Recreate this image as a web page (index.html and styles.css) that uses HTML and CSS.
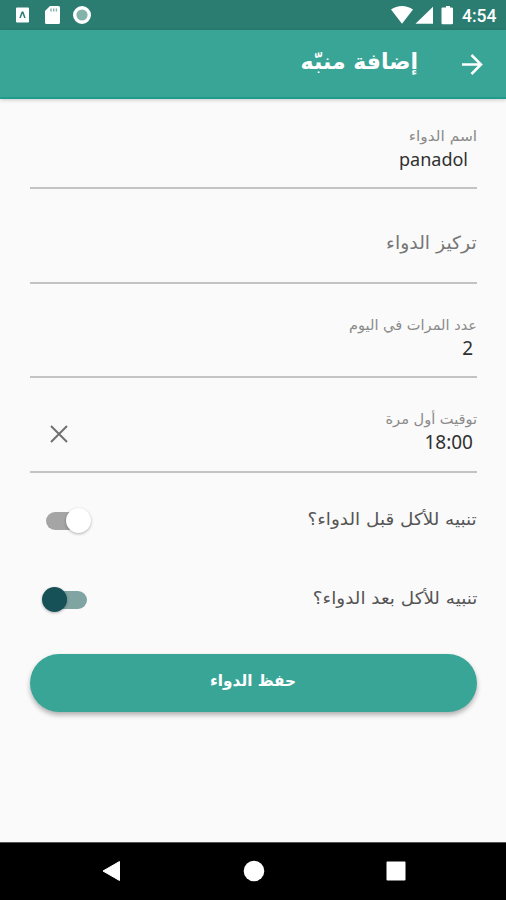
FILE: index.html
```html
<!DOCTYPE html>
<html lang="ar" dir="rtl">
<head>
<meta charset="utf-8">
<title>إضافة منبّه</title>
<link rel="stylesheet" href="styles.css">
</head>
<body>
<div class="status" dir="ltr">
  <svg class="status-left" width="80" height="20" viewBox="0 0 80 20">
    <path fill="#fff" fill-rule="evenodd" d="M2 2.500h11a1 1 0 0 1 1 1v13a1 1 0 0 1-1 1H2a1 1 0 0 1-1-1v-13a1 1 0 0 1 1-1zM4.300 13h1.500l1.700-4.500L9.200 13h1.500L8.400 6.500H6.600z"/>
    <path fill="#fff" d="M35 1h8.500a1.500 1.500 0 0 1 1.500 1.500v15a1.500 1.500 0 0 1-1.500 1.500h-12a1.500 1.500 0 0 1-1.500-1.500V6z"/>
    <path stroke="#84b3ab" stroke-width="1.400" d="M36 3.500v3M38.700 3.500v3M41.400 3.500v3"/>
    <circle cx="67" cy="10" r="7.300" fill="#84b3ab" stroke="#fff" stroke-width="3.400"/>
  </svg>
  <div class="status-right">
    <svg width="66" height="20" viewBox="0 0 66 20" fill="#fff">
      <path d="M1 4.500C7.500-.3 16.500-.3 23 4.500L12 18.700z"/>
      <path d="M43 1.700v17H25.500z"/>
      <path d="M56 1h4v1.500h1.800a1.200 1.200 0 0 1 1.200 1.200v14.300a1.200 1.200 0 0 1-1.200 1.200h-9.100a1.200 1.200 0 0 1-1.200-1.200V3.700a1.200 1.200 0 0 1 1.200-1.200H56z"/>
    </svg>
    <span class="clock">4:54</span>
  </div>
</div>
<header class="bar">
  <svg class="back" width="22" height="22" viewBox="0 0 22 22" fill="none" stroke="#fff" stroke-width="2.500"><path d="M1 11.500h18.500M10.500 2l9.500 9.500-9.500 9.500"/></svg>
  <h1><span class="fit">إضافة منبّه</span></h1>
</header>
<main>
  <div class="field">
    <div class="label"><span class="fit label-name">اسم الدواء</span></div>
    <div class="value value-name" dir="ltr">panadol</div>
  </div>
  <div class="field">
    <div class="placeholder"><span class="fit label-dose">تركيز الدواء</span></div>
  </div>
  <div class="field">
    <div class="label"><span class="fit label-count">عدد المرات في اليوم</span></div>
    <div class="value">2</div>
  </div>
  <div class="field">
    <div class="label"><span class="fit label-time">توقيت أول مرة</span></div>
    <div class="value">18:00</div>
    <svg class="clear" width="18" height="18" viewBox="0 0 18 18" fill="none" stroke="#707070" stroke-width="2"><path d="M1 1l16 16M17 1L1 17"/></svg>
  </div>
  <div class="option first">
    <span class="fit option-text">تنبيه للأكل قبل الدواء؟</span>
    <div class="switch off"><i></i></div>
  </div>
  <div class="option">
    <span class="fit option-text">تنبيه للأكل بعد الدواء؟</span>
    <div class="switch on"><i></i></div>
  </div>
  <button><span class="fit save">حفظ الدواء</span></button>
</main>
<nav dir="ltr">
  <svg width="20" height="22" viewBox="0 0 20 22" fill="#fff" stroke="#fff" stroke-linejoin="round"><path d="M2 11L18.500 1.500v19z"/></svg>
  <svg width="22" height="22" viewBox="0 0 22 22" fill="#fff"><circle cx="11" cy="11" r="10.300"/></svg>
  <svg width="20" height="20" viewBox="0 0 20 20" fill="#fff"><rect x=".5" y=".5" width="19" height="19" rx="1"/></svg>
</nav>
</body>
</html>
```
FILE: styles.css
```css
* { box-sizing: border-box; }
body {
  margin: 0;
  width: 506px;
  height: 900px;
  display: flex;
  flex-direction: column;
  background: #fafafa;
  font-family: "DejaVu Sans", sans-serif;
  color: #303030;
  overflow: hidden;
}
svg { display: block; flex: none; }
.fit { display: inline-block; transform-origin: right center; white-space: nowrap; }
.status {
  height: 30px;
  background: #2b7d71;
  display: flex;
  justify-content: space-between;
  padding: 5px 9px 0 15px;
}
.status-right { display: flex; gap: 6px; }
.clock { font: 500 17.5px/22px Roboto, sans-serif; color: #fff; width: 35px; white-space: nowrap; }
.bar {
  height: 69px;
  background: #39a597;
  border-bottom: 2px solid #1f9c8c;
  box-shadow: 0 1px 4px rgba(0, 0, 0, .2);
  display: flex;
  padding: 23px 23px 0;
  gap: 43px;
}
h1 { margin: 0; font-size: 22px; line-height: 18px; color: #fff; font-weight: bold; }
main { flex: 1; padding: 0 29px 0 30px; }
.field {
  position: relative;
  height: 94.5px;
  border-bottom: 2px solid #c3c3c3;
  padding-top: 31px;
}
.field:first-child { height: 90px; padding-top: 27px; }
.label { font-size: 14px; line-height: 20px; height: 20px; color: #8a8a8a; }
.label-name { transform: scaleX(1.1); }
.label-count, .label-time { transform: scaleX(1.04); }
.label-dose { transform: scaleX(1.045); }
.value { font: 19px/26px "Noto Sans", sans-serif; padding-right: 4px; color: #303030; }
.value-name { text-align: right; padding-right: 9px; font-size: 18px; }
.placeholder { font-size: 18px; line-height: 26px; padding-top: 10px; color: #777; }
.clear { position: absolute; left: 20px; top: 47px; }
.option { height: 79px; display: flex; align-items: center; justify-content: space-between; font-size: 17px; color: #555; }
.option.first { margin-top: 9px; }
.option-text { padding-bottom: 5px; transform: scaleX(1.08); }
.switch { position: relative; width: 41px; height: 18px; border-radius: 9px; }
.switch i { position: absolute; top: -4px; width: 25px; height: 25px; border-radius: 50%; box-shadow: 0 1px 3px rgba(0, 0, 0, .3); }
.off { background: #a5a5a5; margin-left: 16px; }
.off i { right: -4px; background: #fff; }
.on { background: #7fa4a2; margin-left: 16px; }
.on i { left: -4px; background: #175158; }
button {
  display: flex;
  align-items: center;
  justify-content: center;
  width: 447px;
  height: 58px;
  margin-top: 14px;
  padding: 0 0 5px;
  border: 0;
  border-radius: 29px;
  background: #39a597;
  box-shadow: 0 3px 5px rgba(0, 0, 0, .3);
  color: #fff;
  font: bold 16px "DejaVu Sans", sans-serif;
}
.save { transform-origin: center; transform: scaleX(.955); }
nav {
  height: 58px;
  background: #000;
  border-top: 1px solid #555;
  display: flex;
  align-items: center;
  justify-content: space-between;
  padding: 0 100px 2px 101px;
}
```
